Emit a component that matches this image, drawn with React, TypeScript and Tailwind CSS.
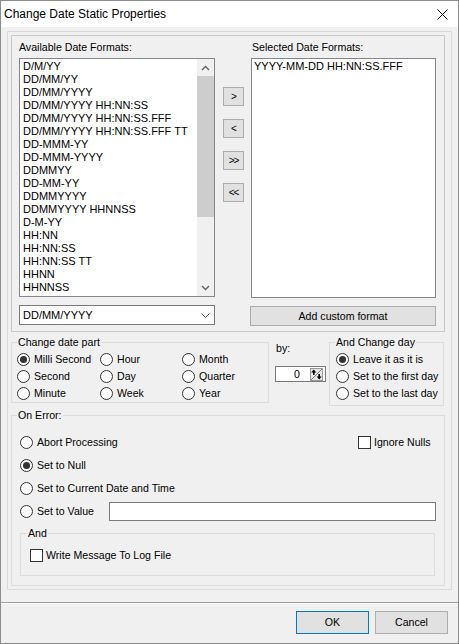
import React from 'react';

const available = [
  'D/M/YY',
  'DD/MM/YY',
  'DD/MM/YYYY',
  'DD/MM/YYYY HH:NN:SS',
  'DD/MM/YYYY HH:NN:SS.FFF',
  'DD/MM/YYYY HH:NN:SS.FFF TT',
  'DD-MMM-YY',
  'DD-MMM-YYYY',
  'DDMMYY',
  'DD-MM-YY',
  'DDMMYYYY',
  'DDMMYYYY HHNNSS',
  'D-M-YY',
  'HH:NN',
  'HH:NN:SS',
  'HH:NN:SS TT',
  'HHNN',
  'HHNNSS',
  'MM/DD/YY',
];

function Radio({ label, checked }: { label: string; checked?: boolean }) {
  return (
    <div className="flex items-center gap-[4px] h-[17px] whitespace-nowrap">
      <span className="w-[13px] h-[13px] rounded-full border border-[#333333] bg-white flex items-center justify-center shrink-0">
        {checked && <span className="w-[7px] h-[7px] rounded-full bg-[#333333]" />}
      </span>
      <span>{label}</span>
    </div>
  );
}

function Check({ label }: { label: string }) {
  return (
    <div className="flex items-center gap-[3px] whitespace-nowrap">
      <span className="w-[13px] h-[13px] border border-[#333333] bg-white shrink-0" />
      <span>{label}</span>
    </div>
  );
}

function Chevron({ up }: { up?: boolean }) {
  return (
    <svg width="9" height="6" viewBox="0 0 9 6">
      <polyline
        points={up ? '1,5 4.5,1.5 8,5' : '1,1 4.5,4.5 8,1'}
        fill="none"
        stroke="#606060"
        strokeWidth="1.4"
      />
    </svg>
  );
}

function SmallBtn({ children }: { children: React.ReactNode }) {
  return (
    <div className="w-[21px] h-[19px] border border-[#adadad] bg-[#e1e1e1] flex items-center justify-center text-[10px] leading-none tracking-[-1px]">
      {children}
    </div>
  );
}

export default function App() {
  return (
    <div className="w-[459px] h-[644px] border border-[#8c8c8c] bg-[#f0f0f0] flex flex-col text-[10.6px] leading-[13px] text-black overflow-hidden font-['Liberation_Sans',Arial,sans-serif]">
      {/* title bar */}
      <div className="h-[26px] bg-white flex items-center justify-between pl-[3px] pr-[10px] shrink-0">
        <span className="text-[12px] leading-[14px]">Change Date Static Properties</span>
        <svg width="11" height="11" viewBox="0 0 11 11">
          <path d="M0.5 0.5 L10.5 10.5 M10.5 0.5 L0.5 10.5" stroke="#000" strokeWidth="1" />
        </svg>
      </div>

      <div className="ml-[6px] mt-[4px] w-[445px] border border-[#dadada] pb-[3px]">
        {/* formats panel */}
        <div className="ml-[3px] mt-[3px] w-[434px] h-[297px] border border-[#c8c8c8] pl-[7px] pt-[5px] flex">
          <div className="w-[196px] flex flex-col">
            <div className="h-[13px]">Available Date Formats:</div>
            <div className="mt-[4px] h-[239px] border border-[#828790] bg-white flex">
              <div className="flex-1 pl-[3px] pt-[1px] overflow-hidden whitespace-nowrap text-[11px]">
                {available.map((f) => (
                  <div key={f} className="h-[13px]">{f}</div>
                ))}
              </div>
              <div className="w-[17px] flex flex-col bg-[#f0f0f0]">
                <div className="h-[17px] flex items-center justify-center"><Chevron up /></div>
                <div className="h-[141px] bg-[#cdcdcd]" />
                <div className="flex-1" />
                <div className="h-[17px] flex items-center justify-center"><Chevron /></div>
              </div>
            </div>
            <div className="mt-[8px] h-[20px] border border-[#7a7a7a] bg-white flex items-center justify-between pl-[3px] pr-[4px] text-[11px]">
              <span>DD/MM/YYYY</span>
              <svg width="9" height="5" viewBox="0 0 9 5">
                <polyline points="0.5,0.5 4.5,4.5 8.5,0.5" fill="none" stroke="#505050" strokeWidth="1" />
              </svg>
            </div>
          </div>

          <div className="ml-[8px] w-[21px] flex flex-col pt-[46px] gap-[13px]">
            <SmallBtn>&gt;</SmallBtn>
            <SmallBtn>&lt;</SmallBtn>
            <SmallBtn>&gt;&gt;</SmallBtn>
            <SmallBtn>&lt;&lt;</SmallBtn>
          </div>

          <div className="ml-[7px] w-[185px] flex flex-col">
            <div className="h-[13px] pl-[1px]">Selected Date Formats:</div>
            <div className="mt-[4px] h-[240px] border border-[#828790] bg-white pl-[2px] pt-[1px] whitespace-nowrap text-[11px]">
              <div className="h-[13px]">YYYY-MM-DD HH:NN:SS.FFF</div>
            </div>
            <div className="mt-[8px] -ml-[1px] h-[20px] border border-[#adadad] bg-[#e1e1e1] flex items-center justify-center">
              Add custom format
            </div>
          </div>
        </div>

        {/* change date part row */}
        <div className="ml-[3px] mt-[4px] h-[70px] flex items-start">
          <fieldset className="w-[258px] border border-[#dcdcdc]">
            <legend className="ml-[5px] px-[1px]">Change date part</legend>
            <div className="pl-[5px] pt-[2px] grid grid-cols-[83px_82px_1fr]">
              <Radio label="Milli Second" checked />
              <Radio label="Hour" />
              <Radio label="Month" />
              <Radio label="Second" />
              <Radio label="Day" />
              <Radio label="Quarter" />
              <Radio label="Minute" />
              <Radio label="Week" />
              <Radio label="Year" />
            </div>
          </fieldset>

          <div className="w-[60px] pl-[6px] flex flex-col">
            <div className="mt-[6px] pl-[1px]">by:</div>
            <div className="mt-[11px] w-[51px] h-[16px] border border-[#7a7a7a] bg-white flex items-center justify-end pr-[2px]">
              <span className="mr-[10px]">0</span>
              <svg width="13" height="13" viewBox="0 0 13 13">
                <rect x="0.5" y="0.5" width="12" height="12" fill="#e6e6e6" stroke="#9a9a9a" />
                <line x1="1" y1="12" x2="12" y2="1" stroke="#808080" />
                <path d="M3.75 1.5 L1.25 4.5 H6.25 Z" fill="#000" />
                <rect x="3" y="4" width="1.6" height="3" fill="#000" />
                <rect x="8.4" y="6" width="1.6" height="3" fill="#000" />
                <path d="M9.2 11.5 L6.7 8.5 H11.7 Z" fill="#000" />
              </svg>
            </div>
          </div>

          <fieldset className="w-[115px] border border-[#dcdcdc]">
            <legend className="ml-[5px] px-[1px]">And Change day</legend>
            <div className="pl-[6px] pt-[2px] pb-[3px]">
              <Radio label="Leave it as it is" checked />
              <Radio label="Set to the first day" />
              <Radio label="Set to the last day" />
            </div>
          </fieldset>
        </div>

        {/* on error */}
        <fieldset className="ml-[3px] mt-[3px] w-[434px] border border-[#dcdcdc]">
          <legend className="ml-[5px] px-[1px]">On Error:</legend>
          <div className="pl-[8px] pr-[8px] pt-[9px] pb-[9px]">
            <div className="h-[23px] flex items-center">
              <Radio label="Abort Processing" />
              <div className="ml-auto w-[78px]">
                <Check label="Ignore Nulls" />
              </div>
            </div>
            <div className="h-[23px] flex items-center">
              <Radio label="Set to Null" checked />
            </div>
            <div className="h-[23px] flex items-center">
              <Radio label="Set to Current Date and Time" />
            </div>
            <div className="h-[23px] flex items-center">
              <Radio label="Set to Value" />
              <div className="ml-auto w-[327px] h-[19px] border border-[#7a7a7a] bg-white" />
            </div>
            <fieldset className="mt-[4px] w-[415px] border border-[#dcdcdc]">
              <legend className="ml-[6px] px-[1px]">And</legend>
              <div className="pl-[9px] pt-[5px] pb-[10px]">
                <div className="h-[20px] flex items-center">
                  <Check label="Write Message To Log File" />
                </div>
              </div>
            </fieldset>
          </div>
        </fieldset>
      </div>

      <div className="mt-[12px] h-[1px] bg-[#a0a0a0]" />
      <div className="h-[1px] bg-white" />

      <div className="mt-[7px] flex justify-end gap-[6px] pr-[10px]">
        <div className="w-[73px] h-[23px] border border-[#0078d7] bg-[#e1e1e1] flex items-center justify-center">OK</div>
        <div className="w-[73px] h-[23px] border border-[#adadad] bg-[#e1e1e1] flex items-center justify-center">Cancel</div>
      </div>
    </div>
  );
}
